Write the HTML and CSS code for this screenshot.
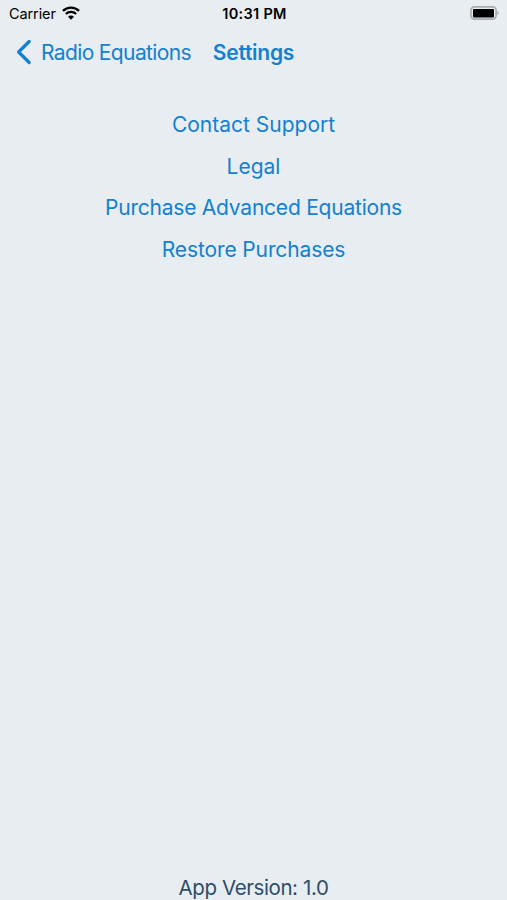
FILE: index.html
```html
<!DOCTYPE html>
<html lang="en">
<head>
  <meta charset="UTF-8">
  <meta name="viewport" content="width=device-width, initial-scale=1.0">
  <title>Settings</title>
  <link rel="stylesheet" href="styles.css">
</head>
<body>
  <div class="status-bar">
    <div class="carrier">
      <span class="carrier-name">Carrier</span>
      <svg class="wifi" viewBox="0 0 18 14" width="18" height="14">
        <path d="M1 4.9a11.4 11.4 0 0 1 16 0M3.9 8a7.3 7.3 0 0 1 10.2 0" fill="none" stroke="#000" stroke-width="2.4"/>
        <path d="M9 13.8L6 10.7a4.2 4.2 0 0 1 6 0z"/>
      </svg>
    </div>
    <span class="time">10:31 PM</span>
    <svg class="battery" viewBox="0 0 30 14" width="30" height="14">
      <rect x="0.9" y="0.9" width="25.2" height="12.2" rx="3.6" fill="none" stroke="#a9adaf" stroke-width="1.7"/>
      <rect x="3" y="3" width="21" height="8.5" rx="1"/>
      <path d="M27.4 4.8a2.5 2.5 0 0 1 0 4.4z" fill="#a9adaf"/>
    </svg>
  </div>

  <header class="nav-bar">
    <a class="back" href="#">
      <svg viewBox="0 0 16 26" width="16" height="26">
        <path d="M13.2 2.5L2.6 13l10.6 10.5" fill="none" stroke="currentColor" stroke-width="3.2" stroke-linecap="round" stroke-linejoin="round"/>
      </svg>
      <span class="back-label">Radio Equations</span>
    </a>
    <h1><span>Settings</span></h1>
  </header>

  <main class="links">
    <a class="support" href="#">Contact Support</a>
    <a class="legal" href="#">Legal</a>
    <a class="purchase" href="#">Purchase Advanced Equations</a>
    <a class="restore" href="#">Restore Purchases</a>
  </main>

  <footer><span>App Version: 1.0</span></footer>
</body>
</html>
```
FILE: styles.css
```css
* {
  box-sizing: border-box;
}
body {
  margin: 0;
  height: 900px;
  display: flex;
  flex-direction: column;
  overflow: hidden;
  background: #e7edf0;
  font-family: Inter, "Liberation Sans", sans-serif;
  font-size: 21px;
}
a {
  color: #1480d0;
  text-decoration: none;
}
.status-bar {
  display: grid;
  grid-template-columns: 1fr auto 1fr;
  align-items: center;
  height: 27px;
  padding: 0 7px 0 9px;
  font-size: 14.5px;
}
.carrier {
  display: flex;
  align-items: center;
  gap: 6px;
}
.carrier-name {
  letter-spacing: -0.1px;
}
.wifi {
  margin-top: -1px;
}
.time {
  font-weight: 600;
  font-size: 14.5px;
  letter-spacing: 0.3px;
}
.battery {
  justify-self: end;
  margin-top: -1px;
}
.nav-bar {
  display: grid;
  grid-template-columns: 1fr auto 1fr;
  align-items: center;
  height: 50px;
  padding: 0 16px;
}
.back {
  display: flex;
  align-items: center;
  gap: 9px;
  white-space: nowrap;
}
.back-label {
  letter-spacing: -0.63px;
}
h1 {
  margin: 0;
  color: #1480d0;
  font-size: 21px;
  font-weight: 600;
  letter-spacing: -0.25px;
}
.links {
  flex: 1;
  display: flex;
  flex-direction: column;
  align-items: center;
  padding-top: 27px;
}
.links a {
  line-height: 41.5px;
}
.links .purchase {
  letter-spacing: -0.22px;
}
.links .restore {
  letter-spacing: -0.12px;
}
footer {
  height: 25px;
  text-align: center;
  color: #2f4d66;
  font-size: 20.5px;
  letter-spacing: -0.4px;
  line-height: 25px;
}
```
